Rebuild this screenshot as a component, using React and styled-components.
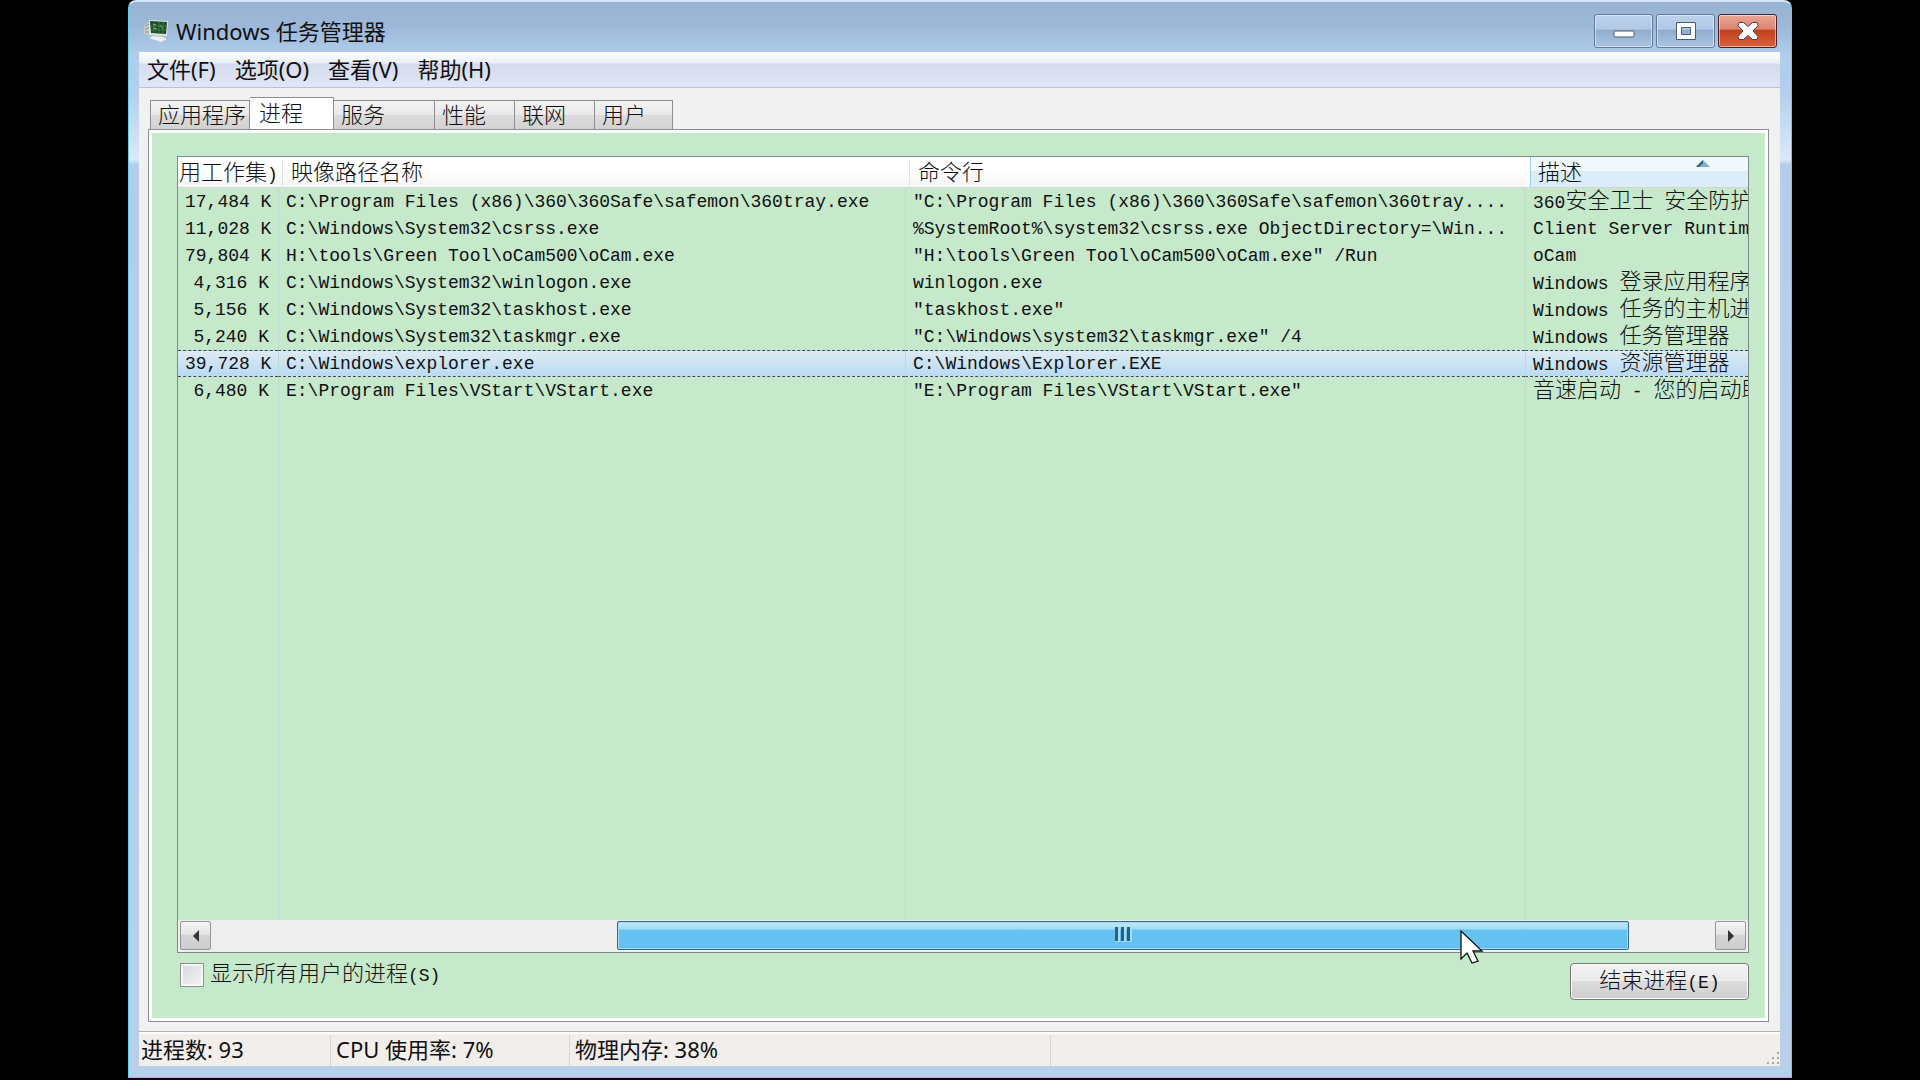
import React from 'react';
import styled, { createGlobalStyle, css } from 'styled-components';

const menus = ['文件(F)', '选项(O)', '查看(V)', '帮助(H)'];

const tabs = [
  { name: '应用程序', width: 100 },
  { name: '进程', width: 84, active: true },
  { name: '服务', width: 101 },
  { name: '性能', width: 80 },
  { name: '联网', width: 80 },
  { name: '用户', width: 78 },
];

const processes = [
  { mem: '17,484 K', path: 'C:\\Program Files (x86)\\360\\360Safe\\safemon\\360tray.exe', cmd: '"C:\\Program Files (x86)\\360\\360Safe\\safemon\\360tray....', desc: '360安全卫士 安全防护' },
  { mem: '11,028 K', path: 'C:\\Windows\\System32\\csrss.exe', cmd: '%SystemRoot%\\system32\\csrss.exe ObjectDirectory=\\Win...', desc: 'Client Server Runtime' },
  { mem: '79,804 K', path: 'H:\\tools\\Green Tool\\oCam500\\oCam.exe', cmd: '"H:\\tools\\Green Tool\\oCam500\\oCam.exe" /Run', desc: 'oCam' },
  { mem: '4,316 K', path: 'C:\\Windows\\System32\\winlogon.exe', cmd: 'winlogon.exe', desc: 'Windows 登录应用程序' },
  { mem: '5,156 K', path: 'C:\\Windows\\System32\\taskhost.exe', cmd: '"taskhost.exe"', desc: 'Windows 任务的主机进' },
  { mem: '5,240 K', path: 'C:\\Windows\\System32\\taskmgr.exe', cmd: '"C:\\Windows\\system32\\taskmgr.exe" /4', desc: 'Windows 任务管理器' },
  { mem: '39,728 K', path: 'C:\\Windows\\explorer.exe', cmd: 'C:\\Windows\\Explorer.EXE', desc: 'Windows 资源管理器', selected: true },
  { mem: '6,480 K', path: 'E:\\Program Files\\VStart\\VStart.exe', cmd: '"E:\\Program Files\\VStart\\VStart.exe"', desc: '音速启动 - 您的启动助' },
];

// Chinese runs are set larger than the latin ones around them
const Mixed = ({ text }) =>
  text.split(/([\u4e00-\u9fff]+)/).filter(Boolean).map((part, i) => (
    /[\u4e00-\u9fff]/.test(part) ? <Han key={i}>{part}</Han> : <React.Fragment key={i}>{part}</React.Fragment>
  ));

const App = () => {
  return (
    <Desktop>
      <GlobalStyle />
      <Window>
        <TitleBar>
          <AppIcon />
          <Title>Windows 任务管理器</Title>
          <Controls>
            <ControlButton aria-label='最小化'>
              <svg width='24' height='22' viewBox='0 0 24 22'>
                <rect x='2' y='11' width='20' height='6' rx='1' fill='#fff' stroke='#4d5d75' />
              </svg>
            </ControlButton>
            <ControlButton aria-label='最大化'>
              <svg width='24' height='22' viewBox='0 0 24 22'>
                <path fillRule='evenodd' d='M2.500 2.500h19v17h-19zM7.500 7.500h9v7h-9z' fill='#fff' stroke='#4d5d75' />
              </svg>
            </ControlButton>
            <ControlButton $close aria-label='关闭'>
              <svg width='24' height='22' viewBox='0 0 24 22'>
                <path d='M3 2.500h4.500l4.500 4 4.500-4H21l1 3-5 5.500 5 5.500-1 3h-4.500l-4.500-4-4.500 4H3l-1-3L7 11 2 5.500z' fill='#fff' stroke='#5c3a40' strokeLinejoin='round' />
              </svg>
            </ControlButton>
          </Controls>
        </TitleBar>
        <Client>
          <MenuBar>
            {menus.map((menu) => <MenuItem key={menu}>{menu}</MenuItem>)}
          </MenuBar>
          <Body>
            <TabStrip role='tablist'>
              {tabs.map((tab) => (
                <Tab key={tab.name} role='tab' aria-selected={!!tab.active} $active={tab.active} $width={tab.width}>{tab.name}</Tab>
              ))}
            </TabStrip>
            <Panel>
              <ListView>
                <TableArea>
                  <Table>
                    <colgroup>
                      <Col $width={100} />
                      <Col $width={627} />
                      <Col $width={620} />
                      <col />
                    </colgroup>
                    <thead>
                      <tr>
                        <HeadCell $first><Mixed text='用工作集)' /></HeadCell>
                        <HeadCell><Mixed text='映像路径名称' /></HeadCell>
                        <HeadCell><Mixed text='命令行' /></HeadCell>
                        <HeadCell $sorted aria-sort='ascending'>
                          <Mixed text='描述' />
                          <SortArrow width='14' height='8' viewBox='0 0 14 8'>
                            <path d='M0 8L7 1l7 7z' fill='#7fb3d0' />
                            <path d='M0 8L7 1v3L3 8z' fill='#2d5e7a' />
                          </SortArrow>
                        </HeadCell>
                      </tr>
                    </thead>
                    <tbody>
                      {processes.map((process) => (
                        <Row key={process.path} $selected={process.selected}>
                          <Cell $right>{process.mem}</Cell>
                          <Cell>{process.path}</Cell>
                          <Cell>{process.cmd}</Cell>
                          <Cell><Mixed text={process.desc} /></Cell>
                        </Row>
                      ))}
                      <tr aria-hidden='true'>
                        <Cell />
                        <Cell />
                        <Cell />
                        <Cell />
                      </tr>
                    </tbody>
                  </Table>
                </TableArea>
                <ScrollBar>
                  <ScrollButton aria-label='向左滚动'>
                    <svg width='8' height='14' viewBox='0 0 8 14'><path d='M7 1v12L1 7z' fill='#333' /></svg>
                  </ScrollButton>
                  <Track>
                    <Thumb>
                      <svg width='19' height='15' viewBox='0 0 19 15'>
                        <path d='M1 0h3v14H1zM7 0h3v14H7zM13 0h3v14h-3z' fill='#2b5f82' />
                        <path d='M4 0h2v15H1v-1h3zM10 0h2v15H7v-1h3zM16 0h2v15h-5v-1h3z' fill='#a9dcf8' />
                      </svg>
                    </Thumb>
                  </Track>
                  <ScrollButton aria-label='向右滚动'>
                    <svg width='8' height='14' viewBox='0 0 8 14'><path d='M1 1v12l6-6z' fill='#333' /></svg>
                  </ScrollButton>
                </ScrollBar>
              </ListView>
              <Actions>
                <CheckLabel>
                  <CheckBox type='checkbox' />
                  <span><Mixed text='显示所有用户的进程(S)' /></span>
                </CheckLabel>
                <EndButton><Mixed text='结束进程(E)' /></EndButton>
              </Actions>
            </Panel>
          </Body>
          <StatusBar>
            <Status $width={192}>进程数: 93</Status>
            <Status $width={239}>CPU 使用率: 7%</Status>
            <Status $width={481}>物理内存: 38%</Status>
            <Grip width='14' height='14' viewBox='0 0 14 14'>
              <path d='M11 1h2v2h-2zM11 6h2v2h-2zM6 6h2v2H6zM11 11h2v2h-2zM6 11h2v2H6zM1 11h2v2H1z' fill='#a9a5a3' />
            </Grip>
          </StatusBar>
        </Client>
      </Window>
      <Pointer width='24' height='36' viewBox='0 0 24 36'>
        <path d='M1 1v28l6-6 5 10 6-2-5-10h9z' fill='#fff' stroke='#111' strokeWidth='1.300' />
      </Pointer>
    </Desktop>
  )
}

export default App;

const AppIcon = () => (
  <svg width='25' height='22' viewBox='0 0 25 22'>
    <path d='M0 5l6-3v14l-6-2z' fill='#c3ccc8' />
    <path d='M1 6l4-2M1 9l4-1M1 12h4' stroke='#8b9892' />
    <path d='M5 0l19 1-1 15-18-1z' fill='#dfe6e2' />
    <path d='M6 1l17 1-1 12-15-1z' fill='#1d4a24' />
    <path d='M10 3v10M15 2v12M19 2v12M7 6h15M7 10h15' stroke='#3c7d41' strokeWidth='1' />
    <path d='M9 4l3 1M9 8l4 1M16 5l3 4' stroke='#7cc07e' strokeWidth='1' />
    <path d='M9 16l10 1 4 2-6 3-12-4z' fill='#eef0ee' />
  </svg>
)

const GlobalStyle = createGlobalStyle`
  * {
    box-sizing: border-box;
  }
  body {
    margin: 0px;
    background: #000000;
  }
  button, input {
    font: inherit;
    color: inherit;
    margin: 0px;
  }
`

const listFont = css`
  font-family: 'Liberation Mono', 'Noto Sans CJK SC', monospace;
  font-size: 18px;
  font-weight: 300;
`

const Desktop = styled.div`
  position: relative;
  min-height: 100vh;
  padding: 0px 128px 2px;
  display: flex;
  background: #000000;
  color: #101010;
  font-family: 'Noto Sans', 'Noto Sans CJK SC', sans-serif;
  font-size: 22px;
  line-height: 26px;
`

const Window = styled.div`
  flex: 1;
  min-width: 0px;
  display: flex;
  flex-direction: column;
  padding: 0px 11px 11px 10px;
  border: 1px solid #63cfe6;
  border-top: 2px solid #d3e6f5;
  border-radius: 8px 8px 0px 0px;
  background: linear-gradient(#98b3d2 0px, #9db8d8 26px, #b0cdec 52px, #b4cfec 90px, #dbe9f8 158px, #b5cdea 162px, #b9d0eb 100%);
`

const TitleBar = styled.div`
  height: 50px;
  display: flex;
  align-items: center;
  padding: 8px 3px 0px 5px;
`

const Title = styled.div`
  flex: 1;
  margin-left: 7px;
`

const Controls = styled.div`
  display: flex;
  gap: 3px;
`

const ControlButton = styled.button`
  width: 59px;
  height: 34px;
  padding: 0px;
  display: flex;
  justify-content: center;
  align-items: center;
  border: 1px solid ${(props) => (props.$close ? '#4b2029' : '#60789a')};
  border-radius: 3px;
  box-shadow: inset 0 0 0 1px rgb(255 255 255 / 50%);
  background: ${(props) => (props.$close
    ? 'linear-gradient(#e9a695, #dc8270 45%, #c13f1c 46%, #d6623c)'
    : 'linear-gradient(#bcd1ec, #b1c9e6 45%, #90abcb 46%, #aac5e4)')};
`

const Client = styled.div`
  flex: 1;
  display: flex;
  flex-direction: column;
  min-width: 0px;
  background: #f1f1f1;
`

const MenuBar = styled.div`
  height: 36px;
  display: flex;
  gap: 19px;
  padding: 0px 8px 2px;
  border-bottom: 1px solid #b9c1d8;
  background: linear-gradient(#ffffff 0px, #e9eef7 11px, #d4dbed 12px, #e2e6f6 34px);
`

const MenuItem = styled.button`
  padding: 0px;
  border: none;
  background: none;
`

const Body = styled.div`
  flex: 1;
  display: flex;
  flex-direction: column;
  padding: 9px 11px 9px 9px;
`

const TabStrip = styled.div`
  height: 32px;
  display: flex;
  align-items: flex-end;
  padding-left: 2px;
`

const Tab = styled.button`
  width: ${(props) => props.$width}px;
  height: ${(props) => (props.$active ? 33 : 29)}px;
  padding: 0px 0px ${(props) => (props.$active ? 7 : 4)}px ${(props) => (props.$active ? 9 : 7)}px;
  margin-bottom: ${(props) => (props.$active ? -1 : 0)}px;
  line-height: 22px;
  text-align: left;
  white-space: nowrap;
  font-family: 'Noto Sans CJK SC', sans-serif;
  font-weight: 300;
  border: 1px solid #8b8e92;
  border-bottom: none;
  border-left-width: ${(props) => (props.$active ? 0 : 1)}px;
  background: ${(props) => (props.$active ? '#ffffff' : 'linear-gradient(#f3f3f3, #e9e9e9 48%, #dcdcdc 52%, #d2d2d2)')};
  & + & {
    border-left-width: 0px;
  }
`

const Panel = styled.div`
  flex: 1;
  display: flex;
  flex-direction: column;
  padding: 26px 19px 21px 28px;
  border: 1px solid #8b8e92;
  box-shadow: inset 0 0 0 3px #ffffff;
  background: #c6e8cb;
`

const ListView = styled.div`
  flex: 1;
  display: flex;
  flex-direction: column;
  border: 1px solid #7c8a8a;
`

const TableArea = styled.div`
  flex: 1;
  display: flex;
  overflow: hidden;
`

const Table = styled.table`
  ${listFont}
  width: 100%;
  table-layout: fixed;
  border-collapse: separate;
  border-spacing: 0px;
`

const Col = styled.col`
  width: ${(props) => props.$width}px;
`

const Han = styled.span`
  font-family: 'Noto Sans CJK SC', sans-serif;
  font-size: 22px;
  font-weight: 300;
  line-height: 16px;
`

const HeadCell = styled.th`
  position: relative;
  height: 31px;
  padding: 4px 0px 0px ${(props) => (props.$first ? 1 : 13)}px;
  line-height: 22px;
  text-align: left;
  font-weight: 300;
  white-space: nowrap;
  border-bottom: 1px solid #d5d5d5;
  background: ${(props) => {
    if (props.$sorted) return 'linear-gradient(90deg, #fcfcfc 5px, #9fd0e8 5px, #9fd0e8 6px, transparent 6px), linear-gradient(#f2f9fd 45%, #dcedf9 46%)';
    if (props.$first) return 'linear-gradient(#ffffff 45%, #f5f5f6)';
    return 'linear-gradient(#dfe1e4, #dfe1e4) 4px 3px / 1px 26px no-repeat, linear-gradient(#ffffff 45%, #f5f5f6)';
  }};
`

const SortArrow = styled.svg`
  position: absolute;
  top: 2px;
  right: 38px;
`

const Row = styled.tr`
  height: 27px;
  ${(props) => props.$selected && css`
    td {
      border-top: 1px dashed #3d4854;
      border-bottom: 1px dashed #3d4854;
      background: linear-gradient(#deebf3, #b9daf3);
    }
  `}
`

const Cell = styled.td`
  padding: 0px ${(props) => (props.$right ? 9 : 0)}px 0px 7px;
  line-height: 22px;
  text-align: ${(props) => (props.$right ? 'right' : 'left')};
  white-space: pre;
  overflow: hidden;
  & + & {
    border-left: 1px solid #b9dcd0;
  }
`

const ScrollBar = styled.div`
  height: 32px;
  display: flex;
  padding: 1px 2px 2px;
  background: #eeeeee;
`

const ScrollButton = styled.button`
  width: 31px;
  padding: 0px;
  display: flex;
  justify-content: center;
  align-items: center;
  border: 1px solid #969696;
  border-radius: 2px;
  background: linear-gradient(#f4f4f4, #e6e6e6 45%, #d4d4d6 50%, #cdcdd0);
`

const Track = styled.div`
  flex: 1;
  display: grid;
  grid-template-columns: 406fr 1012fr 86fr;
`

const Thumb = styled.div`
  grid-column: 2;
  display: flex;
  justify-content: center;
  align-items: center;
  padding-bottom: 2px;
  border: 1px solid #35688c;
  border-radius: 2px;
  box-shadow: inset 0 0 0 1px #a5dbf7;
  background: linear-gradient(#c2e8fb 0px, #a4dcf8 7px, #65c1f0 8px, #65c1f0 24px, #6fb1dc 100%);
`

const Actions = styled.div`
  display: flex;
  justify-content: space-between;
  align-items: flex-start;
  padding: 10px 0px 0px 3px;
  line-height: 22px;
  ${listFont}
`

const CheckLabel = styled.label`
  display: flex;
  align-items: center;
  gap: 6px;
`

const CheckBox = styled.input`
  appearance: none;
  width: 24px;
  height: 24px;
  border: 1px solid #8c9490;
  box-shadow: inset 0 0 0 2px #f7f7f7;
  background: linear-gradient(135deg, #d5d5dc, #f6f6f8);
`

const EndButton = styled.button`
  width: 179px;
  height: 37px;
  padding: 0px;
  border: 1px solid #767b78;
  border-radius: 4px;
  box-shadow: inset 0 0 0 1px #fafafa;
  background: linear-gradient(#f3f3f3, #ebebeb 48%, #dcdcdc 50%, #cfcfcf);
`

const StatusBar = styled.div`
  position: relative;
  height: 35px;
  display: flex;
  border-top: 1px solid #b3b0ae;
  background: #f2eeec;
  box-shadow: inset 0 2px 0 #ffffff;
`

const Status = styled.div`
  width: ${(props) => props.$width}px;
  margin-top: 3px;
  padding: 1px 0px 0px 2px;
  border-right: 1px solid #dad5d3;
  & + & {
    padding-left: 5px;
  }
`

const Grip = styled.svg`
  position: absolute;
  right: 0px;
  bottom: 1px;
`

const Pointer = styled.svg`
  position: absolute;
  left: 1460px;
  top: 930px;
`
